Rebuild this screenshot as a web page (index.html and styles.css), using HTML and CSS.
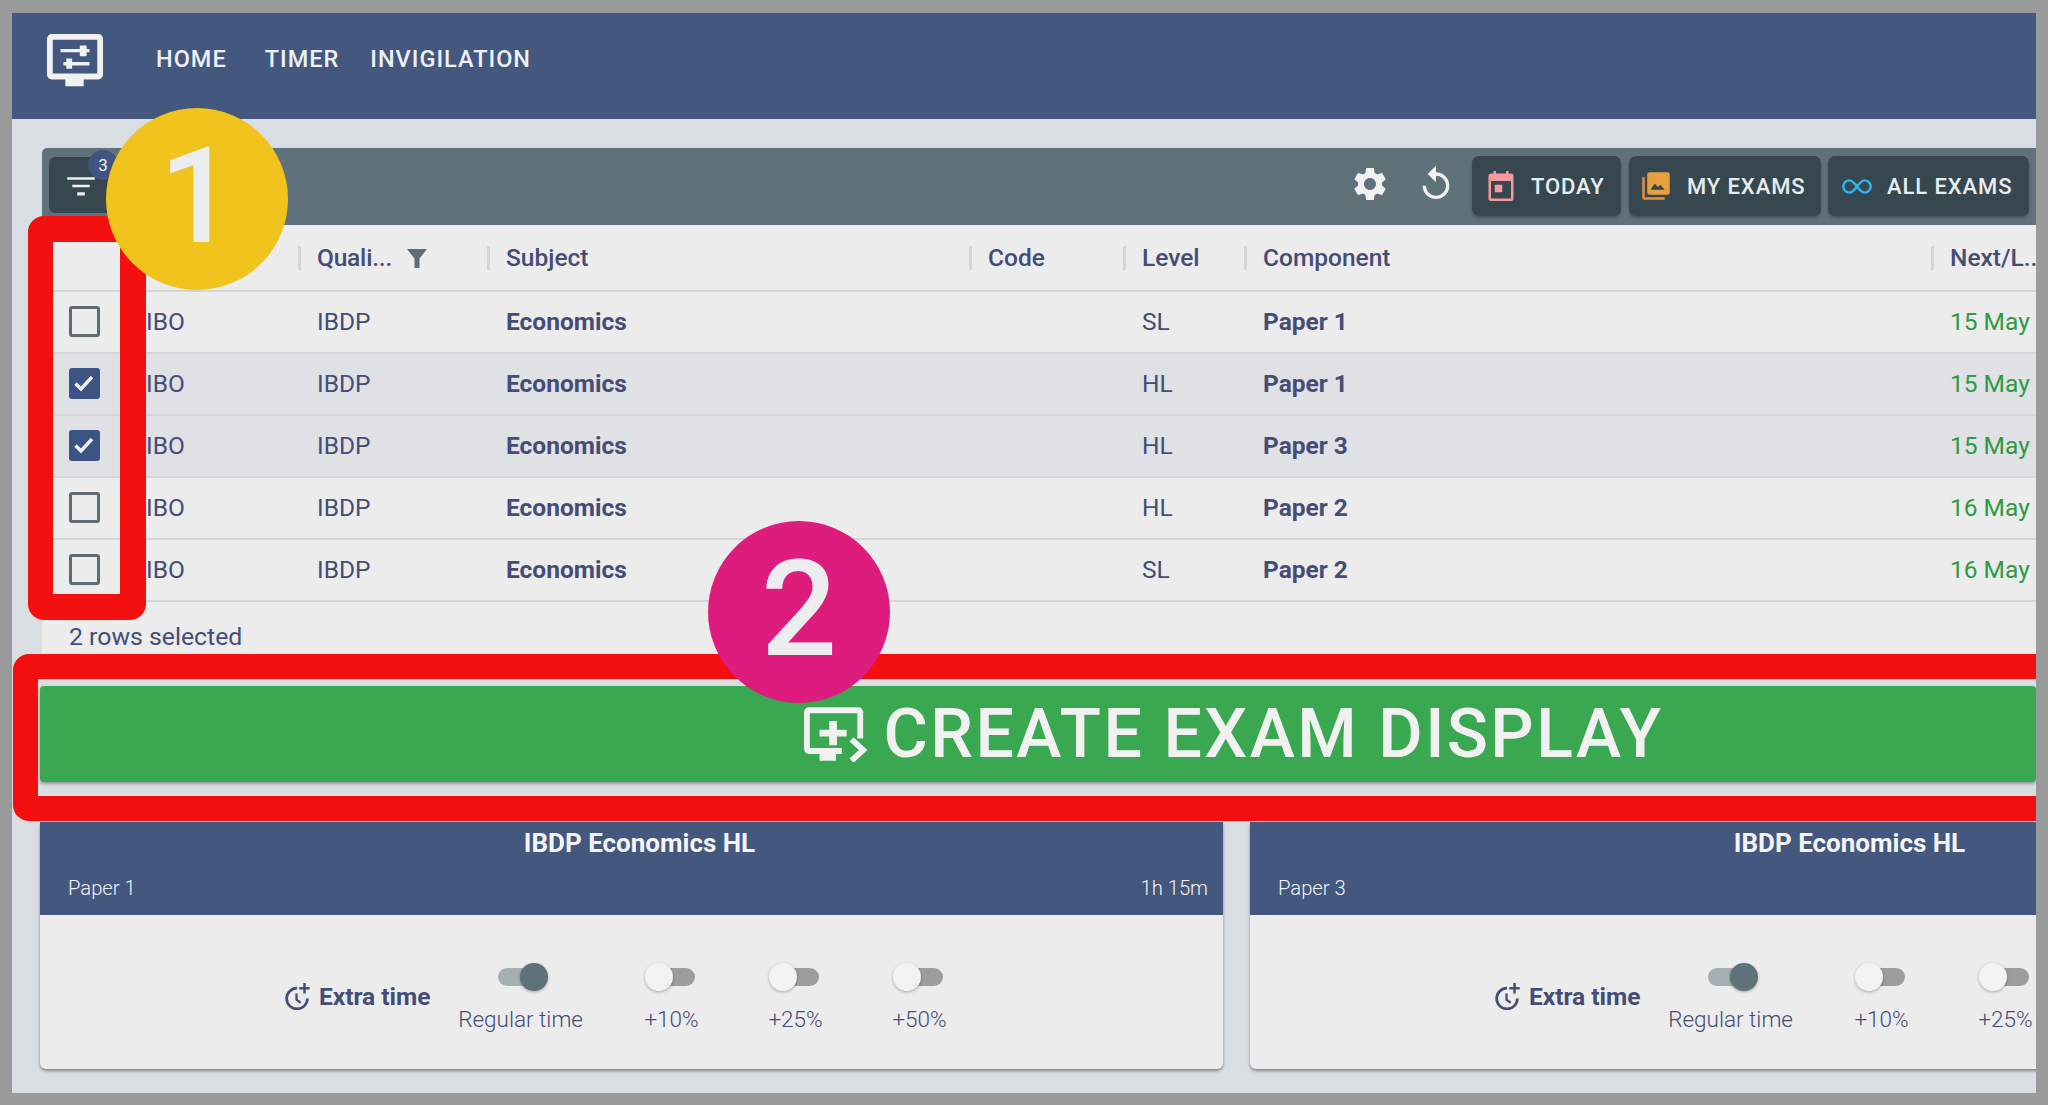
FILE: index.html
```html
<!DOCTYPE html>
<html lang="en">
<head>
<meta charset="utf-8">
<title>Exam Display</title>
<link rel="stylesheet" href="styles.css">
</head>
<body>
<div class="app">
  <header class="topbar">
    <svg class="logo" viewBox="0 0 60 60"><path fill="#f1f1f1" d="M6 1h48a5 5 0 0 1 5 5v37a5 5 0 0 1-5 5H39v7H20v-7H6a5 5 0 0 1-5-5V6a5 5 0 0 1 5-5zm1 6v35h46V7z"/><path fill="#f1f1f1" d="M15 16.500h20V13h7v3.500h3v3.500h-3v4h-7v-4H15zM18 30h3v-3.500h6V30h18v3.500H27v3.500h-6v-3.500h-3z"/></svg>
    <nav class="nav"><a>HOME</a><a>TIMER</a><a>INVIGILATION</a></nav>
  </header>

  <main class="content">
    <section class="table-panel">
      <div class="toolbar">
        <button class="filter-btn">
          <svg class="filter-icon" viewBox="0 0 24 24"><path fill="#eef0f1" d="M1 5h22v2H1zM5 11h14v2H5zM9 17h6v2.500H9z"/></svg>
          <span class="badge">3</span>
        </button>
        <div class="tools">
          <svg class="tool-icon" viewBox="0 0 24 24"><path fill="#f1f1f1" d="M19.14 12.94c.04-.3.06-.61.06-.94 0-.32-.02-.64-.07-.94l2.03-1.58c.18-.14.23-.41.12-.61l-1.92-3.32c-.12-.22-.37-.29-.59-.22l-2.39.96c-.5-.38-1.03-.7-1.62-.94l-.36-2.54c-.04-.24-.24-.41-.48-.41h-3.84c-.24 0-.43.17-.47.41l-.36 2.54c-.59.24-1.13.57-1.62.94l-2.39-.96c-.22-.08-.47 0-.59.22L2.74 8.87c-.12.21-.08.47.12.61l2.03 1.58c-.05.3-.09.63-.09.94s.02.64.07.94l-2.03 1.58c-.18.14-.23.41-.12.61l1.92 3.32c.12.22.37.29.59.22l2.39-.96c.5.38 1.03.7 1.62.94l.36 2.54c.05.24.24.41.48.41h3.84c.24 0 .44-.17.47-.41l.36-2.54c.59-.24 1.13-.56 1.62-.94l2.39.96c.22.08.47 0 .59-.22l1.92-3.32c.12-.22.07-.47-.12-.61l-2.01-1.58zM12 15.6c-1.98 0-3.6-1.62-3.6-3.6s1.62-3.6 3.6-3.6 3.6 1.62 3.6 3.6-1.62 3.6-3.6 3.6z"/></svg>
          <svg class="tool-icon replay" viewBox="0 0 24 24"><path fill="#f1f1f1" d="M12 5V1L7 6l5 5V7c3.310 0 6 2.690 6 6s-2.690 6-6 6-6-2.690-6-6H4c0 4.420 3.580 8 8 8s8-3.580 8-8-3.580-8-8-8z"/></svg>
          <button class="tab tab-today">
            <svg class="tab-icon" viewBox="0 0 24 24"><path fill="#f79aa0" d="M6 0h2v2h8V0h2v2h2a2 2 0 0 1 2 2v18a2 2 0 0 1-2 2H4a2 2 0 0 1-2-2V4a2 2 0 0 1 2-2h2zM4 8v14h16V8z"/><path fill="#f79aa0" d="M7 11h6v6H7z"/></svg>
            TODAY
          </button>
          <button class="tab tab-mine">
            <svg class="tab-icon" viewBox="0 0 24 24"><path fill="#e8a03f" d="M7 1h14a2 2 0 0 1 2 2v14a2 2 0 0 1-2 2H7a2 2 0 0 1-2-2V3a2 2 0 0 1 2-2z"/><path fill="#e8913a" d="M1 5h2v16h16v2H3a2 2 0 0 1-2-2z"/><path fill="#37474f" d="M7.500 15l3.500-5 2.500 3 2-2 3.500 4z"/></svg>
            MY EXAMS
          </button>
          <button class="tab tab-all">
            <svg class="tab-icon tab-icon-wide" viewBox="0 0 34 18"><path fill="none" stroke="#29b6f6" stroke-width="2.600" d="M17 9c-3-4-5-6.500-8-6.500a6.500 6.500 0 0 0 0 13c3 0 5-2.500 8-6.500s5-6.500 8-6.500a6.500 6.500 0 0 1 0 13c-3 0-5-2.500-8-6.500z"/></svg>
            ALL EXAMS
          </button>
        </div>
      </div>

      <div class="grid-row grid-head">
        <div class="cell cell-check"></div>
        <div class="cell cell-org"></div>
        <div class="cell cell-qual sep"><span class="clipped">Quali...</span><svg class="funnel" viewBox="0 0 20 20"><path fill="#616b73" d="M0 1h20l-7.500 9.500V20h-5v-9.500z"/></svg></div>
        <div class="cell cell-subject sep">Subject</div>
        <div class="cell cell-code sep">Code</div>
        <div class="cell cell-level sep">Level</div>
        <div class="cell cell-comp sep">Component</div>
        <div class="cell cell-date sep">Next/L...</div>
      </div>

      <div class="grid-row">
        <div class="cell cell-check"><span class="checkbox"></span></div>
        <div class="cell cell-org">IBO</div><div class="cell cell-qual">IBDP</div>
        <div class="cell cell-subject strong">Economics</div><div class="cell cell-code"></div>
        <div class="cell cell-level">SL</div><div class="cell cell-comp strong">Paper 1</div>
        <div class="cell cell-date date">15 May</div>
      </div>
      <div class="grid-row selected">
        <div class="cell cell-check"><span class="checkbox checked"><svg viewBox="0 0 24 24"><path fill="none" stroke="#eef0f2" stroke-width="3.400" d="M3.500 12.500l5.500 5.500 11-12"/></svg></span></div>
        <div class="cell cell-org">IBO</div><div class="cell cell-qual">IBDP</div>
        <div class="cell cell-subject strong">Economics</div><div class="cell cell-code"></div>
        <div class="cell cell-level">HL</div><div class="cell cell-comp strong">Paper 1</div>
        <div class="cell cell-date date">15 May</div>
      </div>
      <div class="grid-row selected">
        <div class="cell cell-check"><span class="checkbox checked"><svg viewBox="0 0 24 24"><path fill="none" stroke="#eef0f2" stroke-width="3.400" d="M3.500 12.500l5.500 5.500 11-12"/></svg></span></div>
        <div class="cell cell-org">IBO</div><div class="cell cell-qual">IBDP</div>
        <div class="cell cell-subject strong">Economics</div><div class="cell cell-code"></div>
        <div class="cell cell-level">HL</div><div class="cell cell-comp strong">Paper 3</div>
        <div class="cell cell-date date">15 May</div>
      </div>
      <div class="grid-row">
        <div class="cell cell-check"><span class="checkbox"></span></div>
        <div class="cell cell-org">IBO</div><div class="cell cell-qual">IBDP</div>
        <div class="cell cell-subject strong">Economics</div><div class="cell cell-code"></div>
        <div class="cell cell-level">HL</div><div class="cell cell-comp strong">Paper 2</div>
        <div class="cell cell-date date">16 May</div>
      </div>
      <div class="grid-row">
        <div class="cell cell-check"><span class="checkbox"></span></div>
        <div class="cell cell-org">IBO</div><div class="cell cell-qual">IBDP</div>
        <div class="cell cell-subject strong">Economics</div><div class="cell cell-code"></div>
        <div class="cell cell-level">SL</div><div class="cell cell-comp strong">Paper 2</div>
        <div class="cell cell-date date">16 May</div>
      </div>

      <div class="selection-note">2 rows selected</div>
    </section>

    <button class="create-btn">
      <svg class="create-icon" viewBox="0 0 66 56"><path fill="#f1f1f1" d="M5 0h51a5 5 0 0 1 5 5v27h-6V6H6v36h33v6H33v7H16v-7H5a5 5 0 0 1-5-5V5a5 5 0 0 1 5-5z"/><path fill="#f1f1f1" d="M26 14h8v9h10v7H34v9h-8v-9H16v-7h10z"/><path fill="none" stroke="#f1f1f1" stroke-width="6" d="M49 33l12 11-12 11"/></svg>
      CREATE EXAM DISPLAY
    </button>

    <section class="cards">
      <article class="card">
        <div class="card-head">
          <h2 class="card-title">IBDP Economics HL</h2>
          <div class="card-sub"><span>Paper 1</span><span>1h 15m</span></div>
        </div>
        <div class="card-body">
          <div class="extra"><svg class="extra-icon" viewBox="0 0 26 26"><path fill="none" stroke="#454c75" stroke-width="2.600" d="M13.500 5a10 10 0 1 0 10 10"/><path fill="none" stroke="#454c75" stroke-width="2.200" d="M13 10v6l4 3"/><path fill="#454c75" d="M19.500 0h2.400v3.800h3.800v2.400h-3.800V10h-2.400V6.200h-3.800V3.800h3.800z"/></svg><span>Extra time</span></div>
          <div class="option option-regular"><span class="switch on"></span><span class="option-label">Regular time</span></div>
          <div class="option"><span class="switch"></span><span class="option-label">+10%</span></div>
          <div class="option"><span class="switch"></span><span class="option-label">+25%</span></div>
          <div class="option"><span class="switch"></span><span class="option-label">+50%</span></div>
        </div>
      </article>
      <article class="card">
        <div class="card-head">
          <h2 class="card-title">IBDP Economics HL</h2>
          <div class="card-sub"><span>Paper 3</span><span>1h 15m</span></div>
        </div>
        <div class="card-body">
          <div class="extra"><svg class="extra-icon" viewBox="0 0 26 26"><path fill="none" stroke="#454c75" stroke-width="2.600" d="M13.500 5a10 10 0 1 0 10 10"/><path fill="none" stroke="#454c75" stroke-width="2.200" d="M13 10v6l4 3"/><path fill="#454c75" d="M19.500 0h2.400v3.800h3.800v2.400h-3.800V10h-2.400V6.200h-3.800V3.800h3.800z"/></svg><span>Extra time</span></div>
          <div class="option option-regular"><span class="switch on"></span><span class="option-label">Regular time</span></div>
          <div class="option"><span class="switch"></span><span class="option-label">+10%</span></div>
          <div class="option"><span class="switch"></span><span class="option-label">+25%</span></div>
          <div class="option"><span class="switch"></span><span class="option-label">+50%</span></div>
        </div>
      </article>
    </section>
  </main>

  <div class="callout-box box-rows"></div>
  <div class="callout-box box-create"></div>
  <div class="step step-one">1</div>
  <div class="step step-two">2</div>
</div>
</body>
</html>
```
FILE: styles.css
```css
* { box-sizing: border-box; }
html, body { margin: 0; height: 100%; }
body {
  background: #999a9a;
  padding: 13px 12px 12px;
  font-family: Roboto, "Liberation Sans", sans-serif;
  color: #454c75;
  overflow: hidden;
}
button { font-family: inherit; border: 0; padding: 0; cursor: pointer; }

.app {
  position: relative;
  height: 1080px;
  background: #d9dee2;
  overflow: hidden;
}

.topbar {
  height: 106px;
  background: #43577f;
  display: flex;
  align-items: flex-start;
}
.logo { width: 62px; height: 58px; margin: 20px 0 0 32px; }
.nav {
  display: flex;
  margin: 32px 0 0 50px;
  color: #eef0f3;
  font-size: 23.500px;
  font-weight: 500;
  letter-spacing: 1px;
  line-height: 28px;
}
.nav a:nth-child(2) { margin-left: 38px; }
.nav a:nth-child(3) { margin-left: 31px; }

.content { padding: 29px 0 0 28px; }

.table-panel {
  background: #ececec;
  margin-left: 2px;
  height: 506px;
  border-radius: 5px 0 0 0;
}
.toolbar {
  height: 77px;
  background: #5f727a;
  border-radius: 5px 0 0 0;
  display: flex;
  justify-content: space-between;
  padding: 9px 7px 0 7px;
}
.filter-btn {
  position: relative;
  width: 70px;
  height: 56px;
  background: #37474f;
  border-radius: 6px;
  display: block;
}
.filter-icon { position: absolute; left: 17px; top: 14px; width: 30px; height: 30px; }
.badge {
  position: absolute;
  left: 39px;
  top: -7px;
  width: 30px;
  height: 30px;
  border-radius: 50%;
  background: #3f5480;
  color: #eef0f3;
  font-size: 17px;
  line-height: 30px;
  text-align: center;
}
.tools { display: flex; align-items: flex-start; }
.tool-icon { width: 40px; height: 40px; margin-top: 7px; }
.replay { margin-left: 26px; margin-right: 16px; }
.tab {
  height: 60px;
  margin-top: -1px;
  margin-left: 7px;
  background: #37474f;
  border-radius: 7px;
  color: #e8edf1;
  font-size: 22px;
  font-weight: 500;
  letter-spacing: .9px;
  display: flex;
  align-items: center;
  box-shadow: 0 2px 3px rgba(0,0,0,.25);
}
.tab:first-of-type { margin-left: 0; }
.tab-today { width: 149px; padding-left: 14px; gap: 15px; }
.tab-mine { width: 192px; padding-left: 12px; gap: 16px; margin-left: 8px; }
.tab-all { width: 201px; padding-left: 13px; gap: 14px; }
.tab-icon { width: 30px; height: 30px; }
.tab-icon-wide { width: 32px; height: 17px; }

.grid-row {
  display: grid;
  grid-template-columns: 96px 161px 189px 482px 154px 121px 687px 92px;
  height: 62px;
  align-items: center;
  border-bottom: 2px solid #d3d5d7;
  font-size: 24.500px;
  font-weight: 400;
}
.grid-head { height: 67px; font-weight: 500; }
.selected { background: #dfe1e5; }
.cell { white-space: nowrap; height: 100%; display: flex; align-items: center; position: relative; }
.grid-row:not(.grid-head) .cell { padding-bottom: 2px; }
.cell-check { padding-left: 27px; }
.cell-org { padding-left: 8px; }
.cell-qual, .cell-subject, .cell-code, .cell-level, .cell-comp, .cell-date { padding-left: 18px; }
.sep::before {
  content: "";
  position: absolute;
  left: -1px;
  top: 21px;
  width: 3px;
  height: 24px;
  background: #d3d5d7;
}
.strong { font-weight: 700; }
.date { color: #2f9a45; }
.clipped { letter-spacing: -.2px; }
.funnel { width: 20px; height: 20px; margin-left: 15px; }

.checkbox {
  display: block;
  width: 31px;
  height: 31px;
  border: 3.500px solid #5f6b70;
  border-radius: 3px;
  flex: none;
}
.checkbox.checked { background: #3c5483; border-color: #3c5483; }
.checkbox svg { display: block; width: 24px; height: 24px; }

.selection-note { padding: 20px 0 0 27px; font-size: 24.800px; }

.create-btn {
  display: flex;
  align-items: center;
  justify-content: center;
  gap: 15px;
  width: 1996px;
  height: 96px;
  margin-top: 32px;
  padding-left: 392px;
  background: #3aa751;
  border-radius: 4px;
  color: #f1f1f1;
  font-size: 68px;
  font-weight: 500;
  letter-spacing: 2.400px;
  box-shadow: 0 2px 3px rgba(0,0,0,.3);
}
.create-icon { width: 64px; height: 55px; }

.cards {
  display: grid;
  grid-template-columns: 1183px 1183px;
  column-gap: 27px;
  margin-top: 40px;
}
.card { background: #ececec; border-radius: 0 0 6px 6px; box-shadow: 0 2px 3px rgba(0,0,0,.4); height: 247px; }
.card-head { height: 93px; background: #43577f; color: #f4f4f4; padding: 6px 15px 0 28px; }
.card-title { margin: 0; font-size: 26px; line-height: 30px; font-weight: 700; text-align: center; padding-left: 3px; }
.card-sub { display: flex; justify-content: space-between; margin-top: 18px; font-size: 20.200px; line-height: 24px; font-weight: 300; }
.card-body { display: flex; align-items: flex-start; padding: 48px 0 0 243px; }
.extra { display: flex; align-items: center; font-size: 24.500px; font-weight: 700; margin-top: 19px; }
.extra-icon { width: 27px; height: 27px; margin-right: 9px; }
.option { width: 94px; margin-left: 30px; display: flex; flex-direction: column; align-items: center; }
.option-regular { width: 124px; margin-left: 28px; margin-right: 12px; }
.option-label { font-size: 22.500px; font-weight: 300; margin-top: 20px; line-height: 26px; white-space: nowrap; }

.switch { position: relative; display: block; width: 46px; height: 18px; margin-top: 5px; background: #9d9d9d; border-radius: 9px; }
.switch::after {
  content: "";
  position: absolute;
  left: -4px;
  top: -5px;
  width: 28px;
  height: 28px;
  border-radius: 50%;
  background: #f3f3f3;
  box-shadow: 0 1px 3px rgba(0,0,0,.3);
}
.switch.on { background: #a5afb4; }
.switch.on::after { left: auto; right: -4px; background: #5f727a; }

.callout-box { position: absolute; border: 26px solid #f30f0f; border-radius: 16px; }
.box-rows { left: 16px; top: 203px; width: 118px; height: 404px; border-width: 26px 26px 26px 25px; }
.box-create { left: 1px; top: 641px; width: 2100px; height: 167px; border-width: 25px; }

.step {
  position: absolute;
  width: 182px;
  height: 182px;
  border-radius: 50%;
  color: #ecedef;
  font-size: 134px;
  font-weight: 500;
  line-height: 177px;
  text-align: center;
}
.step-one { left: 94px; top: 95px; background: #f0c31d; }
.step-two { left: 696px; top: 508px; background: #dd1c7d; }
```
